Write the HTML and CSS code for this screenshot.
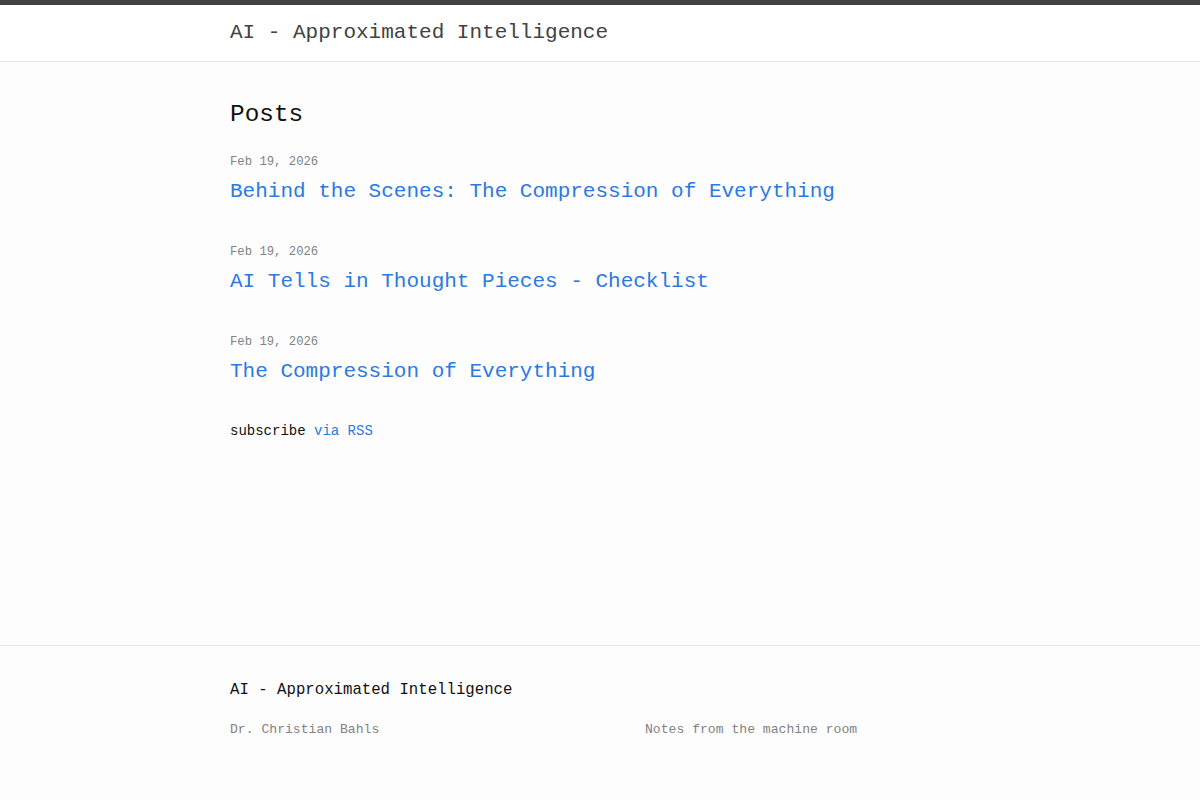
FILE: index.html
```html
<!DOCTYPE html>
<html lang="en">
<head>
    <meta charset="UTF-8">
    <meta name="viewport" content="width=device-width, initial-scale=1.0">
    <title>AI - Approximated Intelligence</title>
    <link rel="stylesheet" href="styles.css">
</head>
<body>

<header class="site-header">
    <div class="wrapper">
        <a class="site-title" href="#">AI - Approximated Intelligence</a>
    </div>
</header>

<main class="page-content">
    <div class="wrapper">
        <h2 class="post-list-heading">Posts</h2>

        <!-- newest first -->
        <ul class="post-list">
            <li>
                <span class="post-meta">Feb 19, 2026</span>
                <h3><a class="post-link" href="#">Behind the Scenes: The Compression of Everything</a></h3>
            </li>
            <li>
                <span class="post-meta">Feb 19, 2026</span>
                <h3><a class="post-link" href="#">AI Tells in Thought Pieces - Checklist</a></h3>
            </li>
            <li>
                <span class="post-meta">Feb 19, 2026</span>
                <h3><a class="post-link" href="#">The Compression of Everything</a></h3>
            </li>
        </ul>

        <p class="rss-subscribe">subscribe <a href="#">via RSS</a></p>
    </div>
</main>

<footer class="site-footer">
    <div class="wrapper">
        <h2 class="footer-heading">AI - Approximated Intelligence</h2>
        <div class="footer-col-wrapper">
            <div class="footer-col">Dr. Christian Bahls</div>
            <div class="footer-col">Notes from the machine room</div>
        </div>
    </div>
</footer>

</body>
</html>
```

FILE: styles.css
```css
html, body {
    margin: 0;
    padding: 0;
}

body {
    font-family: "Liberation Mono", "DejaVu Sans Mono", monospace;
    color: #111;
    background-color: #fdfdfd;
    min-height: 100vh;
    display: flex;
    flex-direction: column;
}

a {
    color: #2a7ae2;
    text-decoration: none;
}

.wrapper {
    max-width: 740px;
    margin: 0 auto;
    padding: 0 30px;
}

/* header */
.site-header {
    border-top: 5px solid #424242;
    border-bottom: 1px solid #e8e8e8;
    background-color: #fff;
    min-height: 56px;
}

.site-title {
    font-size: 21px;
    line-height: 56px;
    color: #424242;
}

/* posts */
.page-content {
    flex: 1;
    padding: 32px 0 0;
}

.post-list-heading {
    font-size: 24.4px;
    font-weight: normal;
    line-height: 42px;
    margin: 0 0 15px;
}

.post-list {
    list-style: none;
    margin: 0;
    padding: 0;
}

.post-list li {
    margin-bottom: 31px;
}

.post-meta {
    display: block;
    font-size: 12.25px;
    line-height: 23px;
    color: #828282;
}

.post-list h3 {
    margin: 0;
    font-size: 21px;
    font-weight: normal;
    line-height: 36px;
}

.rss-subscribe {
    margin: 0;
    font-size: 14px;
    line-height: 20px;
}

/* footer */
.site-footer {
    border-top: 1px solid #e8e8e8;
    padding: 32px 0 60px;
}

.footer-heading {
    font-size: 15.7px;
    font-weight: normal;
    line-height: 24px;
    margin: 0 0 18px;
}

.footer-col-wrapper {
    display: grid;
    grid-template-columns: 415px 1fr;
    font-size: 13.1px;
    line-height: 20px;
    color: #828282;
}
```
